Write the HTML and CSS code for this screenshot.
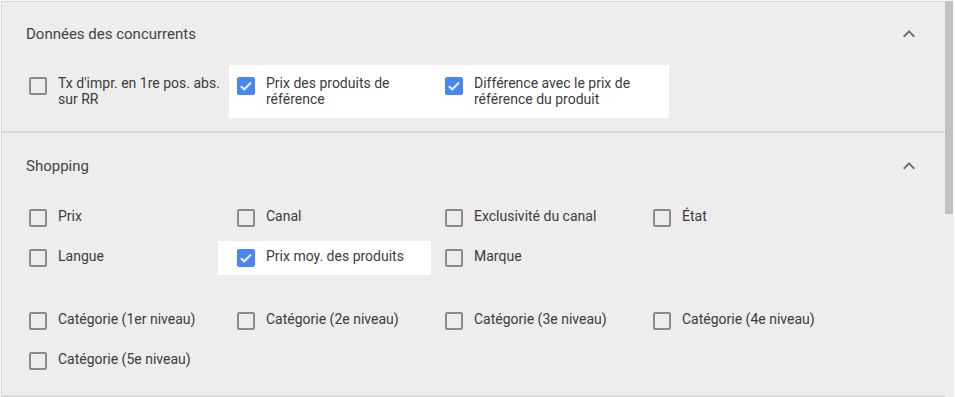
FILE: index.html
```html
<!DOCTYPE html>
<html lang="fr">
<head>
<meta charset="utf-8">
<title>Colonnes</title>
<link rel="stylesheet" href="styles.css">
</head>
<body>
<div class="frame">
  <div class="panel">
    <section class="group">
      <header class="group-head">
        <span class="group-title">Données des concurrents</span>
        <svg class="chev" viewBox="0 0 24 24" width="24" height="24"><path d="M12 8l-6 6 1.41 1.41L12 10.83l4.59 4.58L18 14z"/></svg>
      </header>
      <div class="options">
        <label class="opt"><span class="box"></span><span class="txt">Tx d'impr. en 1re pos. abs. sur RR</span></label>
        <div class="picked">
          <label class="opt"><span class="box on"><svg viewBox="0 0 18 18" width="18" height="18"><path d="M4 9.2l3.2 3.2L14 5.6" fill="none" stroke="#fff" stroke-width="2"/></svg></span><span class="txt">Prix des produits de référence</span></label>
          <label class="opt"><span class="box on"><svg viewBox="0 0 18 18" width="18" height="18"><path d="M4 9.2l3.2 3.2L14 5.6" fill="none" stroke="#fff" stroke-width="2"/></svg></span><span class="txt">Différence avec le prix de référence du produit</span></label>
        </div>
      </div>
    </section>
    <section class="group">
      <header class="group-head">
        <span class="group-title">Shopping</span>
        <svg class="chev" viewBox="0 0 24 24" width="24" height="24"><path d="M12 8l-6 6 1.41 1.41L12 10.83l4.59 4.58L18 14z"/></svg>
      </header>
      <div class="grid">
        <label class="opt"><span class="box"></span><span class="txt">Prix</span></label>
        <label class="opt"><span class="box"></span><span class="txt">Canal</span></label>
        <label class="opt"><span class="box"></span><span class="txt">Exclusivité du canal</span></label>
        <label class="opt"><span class="box"></span><span class="txt">État</span></label>
        <label class="opt"><span class="box"></span><span class="txt">Langue</span></label>
        <label class="opt sel"><span class="box on"><svg viewBox="0 0 18 18" width="18" height="18"><path d="M4 9.2l3.2 3.2L14 5.6" fill="none" stroke="#fff" stroke-width="2"/></svg></span><span class="txt">Prix moy. des produits</span></label>
        <label class="opt"><span class="box"></span><span class="txt">Marque</span></label>
      </div>
      <div class="grid cats">
        <label class="opt"><span class="box"></span><span class="txt">Catégorie (1er niveau)</span></label>
        <label class="opt"><span class="box"></span><span class="txt">Catégorie (2e niveau)</span></label>
        <label class="opt"><span class="box"></span><span class="txt">Catégorie (3e niveau)</span></label>
        <label class="opt"><span class="box"></span><span class="txt">Catégorie (4e niveau)</span></label>
        <label class="opt"><span class="box"></span><span class="txt">Catégorie (5e niveau)</span></label>
      </div>
    </section>
  </div>
  <div class="scrollbar"><div class="thumb"></div></div>
</div>
</body>
</html>
```
FILE: styles.css
```css
* { box-sizing: border-box; }
html, body { margin: 0; padding: 0; }
body {
  width: 955px;
  height: 397px;
  overflow: hidden;
  background: #f6f6f6;
  font-family: Roboto, "Noto Sans", Arial, sans-serif;
  color: #3c3c3c;
}
.frame {
  display: flex;
  height: 397px;
  padding: 1px 0 0 1px;
}
.panel {
  flex: 1;
  background: #ededed;
  border-left: 1px solid #d4d4d4;
  border-top: 1px solid #d6d6d6;
}
.group {
  border-bottom: 2px solid #dadada;
}
.group-head {
  display: flex;
  align-items: center;
  justify-content: space-between;
  height: 63px;
  padding: 0 24px 0 24px;
}
.group + .group .group-head { height: 66px; }
.group-title {
  font-size: 15px;
  color: #444;
}
.chev { fill: #707070; }
.options {
  display: flex;
  align-items: flex-start;
  padding: 0 0 13px 19px;
}
.picked {
  display: flex;
  background: #fff;
  padding-right: 24px;
}
.opt {
  display: flex;
  align-items: flex-start;
  width: 208px;
  padding: 10px 0 11px 8px;
  font-size: 14px;
  line-height: 16px;
}
.box {
  flex: none;
  width: 18px;
  height: 18px;
  margin-top: 2px;
  margin-bottom: -4px;
  margin-right: 11px;
  border: 2px solid #8a8a8a;
  border-radius: 2px;
  position: relative;
}
.box.on {
  background: #4a86f0;
  border-color: #4a86f0;
}
.box svg { position: absolute; left: -2px; top: -2px; }
.grid {
  display: grid;
  grid-template-columns: repeat(4, 208px);
  row-gap: 6px;
  padding: 2px 0 0 19px;
}
.grid .opt { padding: 7px 0 11px 8px; }
.grid .box { margin-top: 1px; }
.grid .opt.sel {
  background: #fff;
  margin-left: -11px;
  padding-left: 19px;
  width: 213px;
}
.cats { padding-top: 29px; padding-bottom: 17px; }
.scrollbar {
  width: 10px;
  flex: none;
  background: #ededed;
  border-right: 2px solid #f7f7f7;
}
.thumb {
  height: 213px;
  background: #c1c1c1;
}
```
